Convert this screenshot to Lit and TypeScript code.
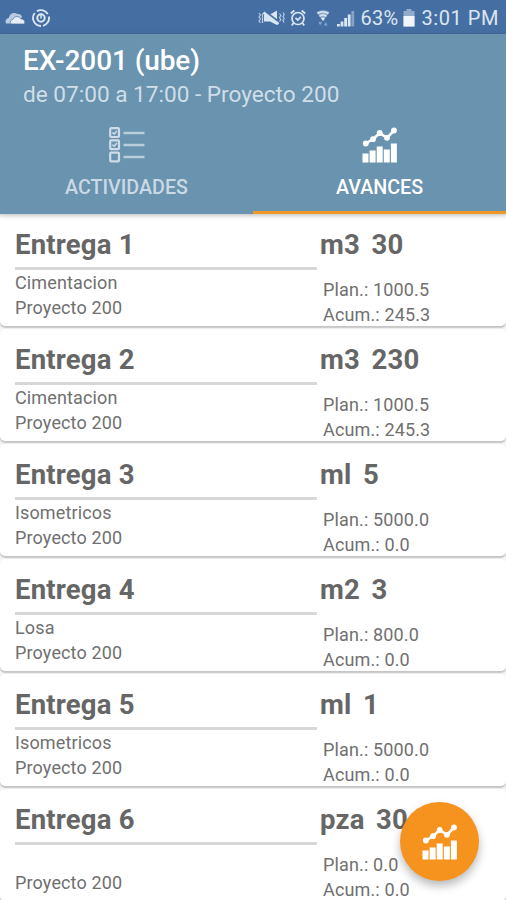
import { LitElement, html, css, svg } from "lit";
import { customElement, property } from "lit/decorators.js";

interface Entrega {
  title: string;
  activity: string;
  project: string;
  unit: string;
  amount: string;
  planned: string;
  total: string;
}

const row = (n: number, activity: string, unit: string, amount: string, planned: string, total: string): Entrega => ({
  title: `Entrega ${n}`,
  activity,
  project: "Proyecto 200",
  unit,
  amount,
  planned,
  total,
});

const ENTREGAS: Entrega[] = [
  row(1, "Cimentacion", "m3", "30", "1000.5", "245.3"),
  row(2, "Cimentacion", "m3", "230", "1000.5", "245.3"),
  row(3, "Isometricos", "ml", "5", "5000.0", "0.0"),
  row(4, "Losa", "m2", "3", "800.0", "0.0"),
  row(5, "Isometricos", "ml", "1", "5000.0", "0.0"),
  row(6, "", "pza", "30", "0.0", "0.0"),
];

const chartIcon = html`<svg width="36" height="36" viewBox="0 0 36 36" fill="#fff">
  <rect x="0.5" y="26.5" width="6" height="9" />
  <rect x="7.6" y="23.5" width="6" height="12" />
  <rect x="14.7" y="19.5" width="6" height="16" />
  <rect x="21.8" y="22.5" width="6" height="13" />
  <rect x="28.9" y="16.5" width="6" height="19" />
  <path d="M3.8 16.5 11 12.2 17.7 6 25 10.8 32 3.5" fill="none" stroke="#fff" stroke-width="2.6" stroke-linejoin="round" />
  ${[[3.8, 16.5], [11, 12.2], [17.7, 6], [25, 10.8], [32, 3.5]].map(
    ([x, y]) => svg`<circle cx=${x} cy=${y} r="2.9" />`
  )}
</svg>`;

const listIcon = html`<svg width="36" height="36" viewBox="0 0 36 36" fill="none" stroke="#cddce8" stroke-width="2.2">
  <rect x="1.2" y="1.2" width="8.8" height="8.8" rx="1" />
  <rect x="1.2" y="13.4" width="8.8" height="8.8" rx="1" />
  <rect x="1.2" y="25.6" width="8.8" height="8.8" rx="1" />
  <path d="M3.4 5.4 5.2 7 8 3.9M3.4 17.6 5.2 19.2 8 16.1" stroke-width="1.5" />
  <path d="M14.5 6H35.5M14.5 18H35.5M14.5 30H35.5" stroke="#b9cddc" stroke-width="2.6" />
</svg>`;

@customElement("status-bar")
class StatusBar extends LitElement {
  static styles = css`
    :host {
      display: flex;
      align-items: center;
      height: 34px;
      padding: 2px 7px 0 5px;
      box-sizing: border-box;
      background: #456fa3;
      color: #dce6f2;
      font-size: 20px;
    }
    svg { display: block; flex: none; }
    .cloud { margin-right: 6px; }
    .vibrate { margin-left: auto; }
    .alarm { margin-left: 5px; }
    .wifi { margin-left: 10px; }
    .signal { margin-left: 7px; }
    .percent { margin-left: 6px; letter-spacing: 0.3px; }
    .battery { margin-left: 4px; }
    .clock { margin-left: 7px; letter-spacing: 0.55px; }
  `;

  render() {
    return html`
      <svg class="cloud" width="21" height="14" viewBox="0 0 21 14">
        <path d="M1 12.5C-.5 9 2 7 3.8 7 4.5 2.5 9 .5 12.5 3 15 2.5 17 4.5 17 6.5L8 12.5Z" fill="#b9cbe2" />
        <path d="M6 13C4.5 10.5 6 8.5 8 8.3 9 5 14.5 4.5 16 8 19 7.8 20.5 10.5 19.5 13Z" fill="#e6edf6" stroke="#456fa3" stroke-width=".7" />
      </svg>
      <svg width="18" height="18" viewBox="0 0 18 18" fill="none" stroke="#dce6f2">
        <path d="M15.8 5A8 8 0 0 0 5 2.1M2.8 4A8 8 0 0 0 9 17M11 16.8A8 8 0 0 0 16.9 7.5" stroke-width="1.8" />
        <circle cx="9" cy="9" r="3.7" stroke-width="2" />
        <path d="M9 4.5V9.5" stroke-width="1.5" />
      </svg>
      <svg class="vibrate" width="27" height="18" viewBox="0 0 27 18">
        <path d="M6 5.5H12L19 1.5V16L12 12.5H6Z" fill="#dce6f2" />
        <path d="M6 2 20 12.5" stroke="#456fa3" stroke-width="2.5" />
        <path d="M5.5 3.5 20.5 15" stroke="#dce6f2" stroke-width="2.5" />
        <path d="M1 4 2.5 6 1 8 2.5 10 1 12 2.5 14M4.5 4.5V14M21.5 4.5 22.8 6.5 21.5 8.5 22.8 10.5 21.5 12.5M25 3.5 26.2 5.5 25 7.5 26.2 9.5 25 11.5 26.2 13.5" fill="none" stroke="#b9cbe2" stroke-width="1.2" />
      </svg>
      <svg class="alarm" width="16" height="18" viewBox="0 0 16 18" fill="none" stroke="#dce6f2" stroke-width="1.7">
        <circle cx="8" cy="9.5" r="6" />
        <path d="M.8 4.5 4.3 1.5M15.2 4.5 11.7 1.5M3.5 14 1.8 16.5M12.5 14 14.2 16.5M5.5 8.8 7.8 11 10.8 7.8" />
      </svg>
      <svg class="wifi" width="14" height="18" viewBox="0 0 14 18">
        <path d="M.5 3Q7-.5 13.5 3L7 12Z" fill="#8fabcf" />
        <path d="M1.5 4.5Q7 1 12.5 4.5M3.5 7.3Q7 4.8 10.5 7.3" fill="none" stroke="#dce6f2" stroke-width="1.5" />
        <path d="M5 9.2Q7 8 9 9.2L7 12Z" fill="#e6edf6" />
        <path d="M2.5 13H6L4.2 16.5ZM8 16.5H11.5L9.8 13Z" fill="#86a9d0" />
      </svg>
      <svg class="signal" width="18" height="17" viewBox="0 0 18 17" fill="#dce6f2">
        <rect x="0" y="14" width="2.8" height="2.5" />
        <rect x="3.6" y="11.5" width="2.8" height="5" />
        <rect x="7.2" y="8" width="2.8" height="8.5" />
        <rect x="10.8" y="4.5" width="2.8" height="12" />
        <rect x="14.4" y="1" width="2.8" height="15.5" fill="#86a3c8" />
      </svg>
      <span class="percent">63%</span>
      <svg class="battery" width="12" height="18" viewBox="0 0 12 18">
        <path d="M3.5 0H8.5V2H11.5V17.5H.5V2H3.5Z" fill="#91abcd" />
        <rect x=".5" y="7" width="11" height="10.5" fill="#f1f5fa" />
      </svg>
      <span class="clock">3:01 PM</span>
    `;
  }
}

@customElement("entrega-card")
class EntregaCard extends LitElement {
  @property({ attribute: false }) item!: Entrega;

  static styles = css`
    :host {
      display: grid;
      grid-template-columns: 302px 1fr;
      column-gap: 3px;
      height: 112px;
      padding: 16px 0 0 15px;
      box-sizing: border-box;
      background: #fff;
      border-radius: 5px;
      box-shadow: 0 2px 1.5px #c4c4c4;
      color: #707070;
      font-size: 18px;
      letter-spacing: 0.14px;
      line-height: 25px;
    }
    .title {
      height: 30px;
      line-height: 30px;
      font-size: 27.5px;
      letter-spacing: 0.2px;
      font-weight: 700;
      color: #666;
      white-space: nowrap;
    }
    .rule { height: 3px; margin-top: 7px; background: #d8d8d8; }
    .line { height: 25px; white-space: nowrap; }
    .amount { margin-left: 11.5px; }
    .figures { padding: 17px 0 0 3px; }
  `;

  render() {
    const i = this.item;
    return html`
      <div>
        <div class="title">${i.title}</div>
        <div class="rule"></div>
        <div class="line">${i.activity}</div>
        <div class="line">${i.project}</div>
      </div>
      <div>
        <div class="title">${i.unit}<span class="amount">${i.amount}</span></div>
        <div class="figures">
          <div class="line">Plan.: ${i.planned}</div>
          <div class="line">Acum.: ${i.total}</div>
        </div>
      </div>
    `;
  }
}

@customElement("app-root")
class AppRoot extends LitElement {
  static styles = css`
    :host {
      display: flex;
      flex-direction: column;
      position: relative;
      height: 900px;
      overflow: hidden;
      background: #f6f6f6;
      font-family: Roboto, "Liberation Sans", sans-serif;
    }
    status-bar { flex: none; }
    .header {
      position: relative;
      z-index: 1;
      flex: none;
      height: 180px;
      background: #6993ae;
      box-shadow: 0 1px 5px rgba(0, 0, 0, 0.3);
    }
    .heading { height: 93px; padding: 10px 0 0 23px; box-sizing: border-box; }
    .name { font-size: 28px; line-height: 34px; font-weight: 500; letter-spacing: -0.1px; color: #fff; }
    .schedule { font-size: 22.6px; line-height: 34px; color: #cfdee8; }
    .tabs { display: grid; grid-template-columns: 1fr 1fr; height: 87px; }
    .tab {
      display: flex;
      flex-direction: column;
      align-items: center;
      gap: 13px;
      box-sizing: border-box;
      border-bottom: 3px solid transparent;
      font-size: 19.7px;
      line-height: 24px;
      font-weight: 500;
      color: #c9d9e5;
    }
    .active { color: #fff; border-bottom-color: #ef9a27; }
    .list { display: flex; flex-direction: column; gap: 3px; }
    entrega-card { flex: none; }
    .fab {
      position: absolute;
      z-index: 2;
      right: 27px;
      bottom: 19px;
      display: flex;
      align-items: center;
      justify-content: center;
      width: 79px;
      height: 79px;
      padding: 0;
      border: 0;
      border-radius: 50%;
      background: #f6921e;
      box-shadow: 0 5px 10px rgba(0, 0, 0, 0.28);
    }
  `;

  render() {
    return html`
      <status-bar></status-bar>
      <div class="header">
        <div class="heading">
          <div class="name">EX-2001 (ube)</div>
          <div class="schedule">de 07:00 a 17:00 - Proyecto 200</div>
        </div>
        <div class="tabs">
          <div class="tab">${listIcon}<span>ACTIVIDADES</span></div>
          <div class="tab active">${chartIcon}<span>AVANCES</span></div>
        </div>
      </div>
      <div class="list">${ENTREGAS.map((e) => html`<entrega-card .item=${e}></entrega-card>`)}</div>
      <button class="fab" aria-label="Avances">${chartIcon}</button>
    `;
  }
}
